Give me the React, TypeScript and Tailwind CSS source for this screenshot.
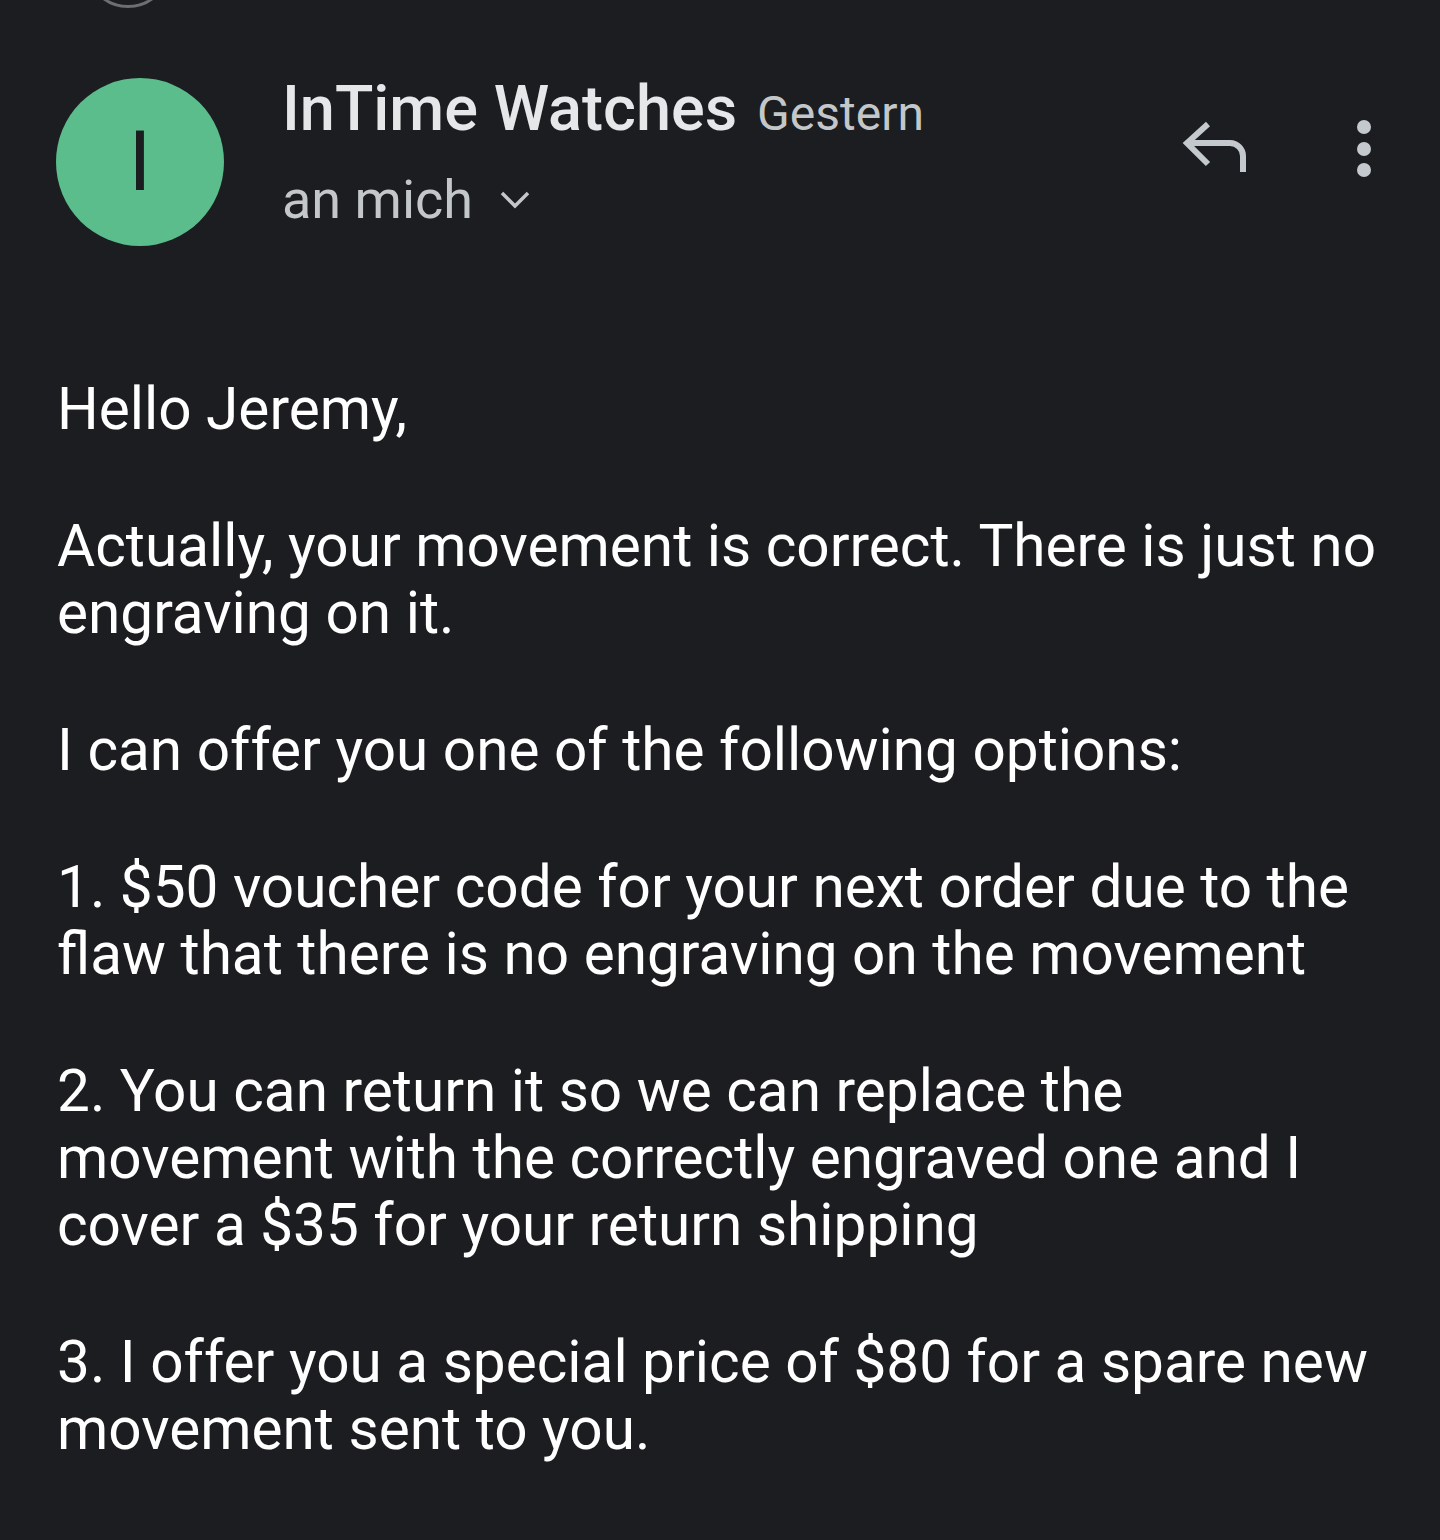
import React from "react";

export default function App() {
  const body = "font-['Roboto',sans-serif] text-white text-[58.5px] leading-[67px]";
  return (
    <div className="w-[1440px] h-[1540px] bg-[#1b1d20] overflow-hidden relative">
      <div className="absolute left-[85px] top-[-80px] w-[86px] h-[88px] rounded-full border-[3px] border-[#6b6e72]" />
      <div className="flex items-start pt-[78px] pl-[56px] pr-[69px]">
        <div className="w-[168px] h-[168px] rounded-full bg-[#5bbd8c] flex items-center justify-center shrink-0">
          <span className="font-['Roboto',sans-serif] text-[#1b1d20] text-[84px] leading-none">I</span>
        </div>
        <div className="ml-[58px] flex flex-col mt-[-5px]">
          <div className="flex items-baseline gap-[20px] font-['Roboto',sans-serif]">
            <span className="text-[#e6e7e8] text-[63px] leading-[72px] font-medium">InTime Watches</span>
            <span className="text-[#c4c7c9] text-[48px] leading-[72px]">Gestern</span>
          </div>
          <div className="flex items-center mt-[10px]">
            <span className="font-['Roboto',sans-serif] text-[#c4c7c9] text-[54px] leading-[80px]">an mich</span>
            <svg className="ml-[26px] mt-[-2px]" width="32" height="20" viewBox="0 0 32 20" fill="none" stroke="#c4c7c9" strokeWidth="3.5">
              <path d="M3 4l13 13 13-13" />
            </svg>
          </div>
        </div>
        <div className="ml-auto flex items-start gap-[107px] pt-[42px]">
          <svg width="68" height="56" viewBox="0 0 68 56" fill="none" stroke="#c4c9ce" strokeWidth="6">
            <path d="M26 4L5 23l21 21" />
            <path d="M5 23h43a13 13 0 0 1 13 13v16" />
          </svg>
          <div className="flex flex-col gap-[7.5px]">
            <span className="w-[14px] h-[14px] rounded-full bg-[#c4c9ce]" />
            <span className="w-[14px] h-[14px] rounded-full bg-[#c4c9ce]" />
            <span className="w-[14px] h-[14px] rounded-full bg-[#c4c9ce]" />
          </div>
        </div>
      </div>
      <div className={`${body} pl-[57px] pr-[40px] pt-[130px] flex flex-col gap-[70px]`}>
        <p>Hello Jeremy,</p>
        <p>Actually, your movement is correct. There is just no engraving on it.</p>
        <p>I can offer you one of the following options:</p>
        <p>1. $50 voucher code for your next order due to the flaw that there is no engraving on the movement</p>
        <p>2. You can return it so we can replace the movement with the correctly engraved one and I cover a $35 for your return shipping</p>
        <p>3. I offer you a special price of $80 for a spare new movement sent to you.</p>
      </div>
    </div>
  );
}
